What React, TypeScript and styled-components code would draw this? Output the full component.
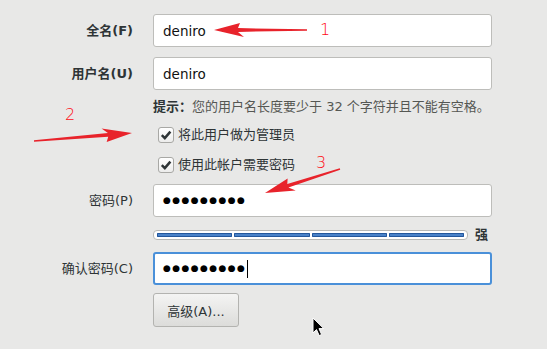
import React from "react";
import styled, { createGlobalStyle } from "styled-components";

const GlobalStyle = createGlobalStyle`
    html, body {
        margin: 0;
        padding: 0;
        background: #e8e8e7;
    }
    body {
        font-family: "DejaVu Sans", "Noto Sans CJK SC", sans-serif;
        font-size: 13px;
        color: #2e3436;
    }
`;

const Page = styled.div`
    position: relative;
    width: 547px;
    height: 349px;
    overflow: hidden;
    background: #e8e8e7;
`;

const Form = styled.div`
    display: flex;
    flex-direction: column;
`;

const Row = styled.div<{ $mt: number; $h?: number }>`
    display: grid;
    grid-template-columns: 133px 339px;
    column-gap: 20px;
    align-items: center;
    margin-top: ${(p) => p.$mt}px;
    height: ${(p) => (p.$h ? `${p.$h}px` : "auto")};
`;

const Label = styled.div<{ $bold?: boolean }>`
    grid-column: 1;
    text-align: right;
    font-weight: ${(p) => (p.$bold ? 700 : 400)};
    color: #2e3436;
    line-height: 16px;
`;

const Field = styled.div<{ $focused?: boolean }>`
    grid-column: 2;
    box-sizing: border-box;
    height: 33px;
    display: flex;
    align-items: center;
    padding-left: ${(p) => (p.$focused ? 8 : 9)}px;
    background: #ffffff;
    border: ${(p) => (p.$focused ? "2px solid #4a90d9" : "1px solid #bdbdba")};
    border-radius: 3px;
    color: #111;
    font-size: 13.5px;
`;

const Dots = styled.span`
    font-size: 9px;
    letter-spacing: 1.4px;
    color: #000;
    line-height: 1;
`;

const Caret = styled.span`
    display: inline-block;
    width: 1px;
    height: 18px;
    margin-left: 1px;
    background: #000;
`;

const Hint = styled.div`
    grid-column: 2;
    line-height: 16px;
    color: #555753;
    white-space: nowrap;
`;

const HintTitle = styled.span`
    font-weight: 700;
    color: #2e3436;
`;

const CheckRow = styled.label`
    grid-column: 2;
    display: flex;
    align-items: center;
    gap: 4px;
    padding-left: 5px;
    line-height: 16px;
    color: #2e3436;
`;

const CheckBox = styled.span`
    box-sizing: border-box;
    width: 16px;
    height: 16px;
    border: 1px solid #a8a8a5;
    border-radius: 3px;
    background: linear-gradient(#ffffff, #ececeb);
    display: flex;
    align-items: center;
    justify-content: center;
`;

const StrengthWrap = styled.div`
    grid-column: 2;
    display: flex;
    align-items: center;
    gap: 7px;
    height: 10px;
`;

const StrengthBar = styled.div`
    flex: 1;
    box-sizing: border-box;
    height: 10px;
    display: flex;
    gap: 2px;
    padding: 2px 3px;
    background: #ffffff;
    border: 1px solid #b8b8b5;
    border-radius: 4px;
`;

const Segment = styled.div`
    flex: 1;
    background: #4a82c8;
    box-shadow: inset 0 0 0 1px #23579c;
    border-radius: 1px;
`;

const StrengthText = styled.span`
    width: 17px;
    font-weight: 700;
    line-height: 10px;
    color: #2e3436;
`;

const Button = styled.button`
    grid-column: 2;
    box-sizing: border-box;
    width: 86px;
    height: 34px;
    padding: 0;
    font-family: inherit;
    font-size: 13px;
    color: #2e3436;
    background: linear-gradient(#f4f4f3, #dcdcda);
    border: 1px solid #b3b3b0;
    border-radius: 3px;
`;

const Overlay = styled.svg`
    position: absolute;
    left: 0;
    top: 0;
    pointer-events: none;
`;

const Number = styled.span<{ $x: number; $y: number }>`
    position: absolute;
    left: ${(p) => p.$x}px;
    top: ${(p) => p.$y}px;
    font-family: "DejaVu Sans", sans-serif;
    font-size: 16px;
    font-weight: 300;
    line-height: 16px;
    color: #ff0a14;
`;

const Pointer = styled.svg`
    position: absolute;
    left: 312px;
    top: 317px;
`;

type ArrowProps = { x1: number; y1: number; x2: number; y2: number };

// red annotation arrow, tail (x1,y1) -> tip (x2,y2)
const Arrow = ({ x1, y1, x2, y2 }: ArrowProps) => {
    const len = Math.hypot(x2 - x1, y2 - y1);
    const angle = (Math.atan2(y2 - y1, x2 - x1) * 180) / Math.PI;
    const H = 28;
    const W = 7;
    const pts = [
        [0, 0],
        [-H - 2, -W],
        [-H + 4, -1.9],
        [-len, -0.7],
        [-len, 0.7],
        [-H + 4, 1.9],
        [-H + 2, W],
    ]
        .map((p) => p.join(","))
        .join(" ");
    return (
        <g transform={`translate(${x2} ${y2}) rotate(${angle})`}>
            <polygon points={pts} fill="#e8232b" />
        </g>
    );
};

const Check = () => (
    <svg width="12" height="12" viewBox="0 0 12 12">
        <path d="M1.8 6.2 L4.8 9.1 L10.4 2.6" fill="none" stroke="#2e3436" strokeWidth="2.5" />
    </svg>
);

const App = () => {
    return (
        <Page>
            <GlobalStyle />
            <Form>
                <Row $mt={14}>
                    <Label $bold>全名(F)</Label>
                    <Field>deniro</Field>
                </Row>
                <Row $mt={10}>
                    <Label $bold>用户名(U)</Label>
                    <Field>deniro</Field>
                </Row>
                <Row $mt={9}>
                    <Hint>
                        <HintTitle>提示：</HintTitle>您的用户名长度要少于 32 个字符并且不能有空格。
                    </Hint>
                </Row>
                <Row $mt={12} $h={16}>
                    <CheckRow>
                        <CheckBox><Check /></CheckBox>
                        将此用户做为管理员
                    </CheckRow>
                </Row>
                <Row $mt={14} $h={16}>
                    <CheckRow>
                        <CheckBox><Check /></CheckBox>
                        使用此帐户需要密码
                    </CheckRow>
                </Row>
                <Row $mt={11}>
                    <Label>密码(P)</Label>
                    <Field><Dots>●●●●●●●●●</Dots></Field>
                </Row>
                <Row $mt={13} $h={10}>
                    <StrengthWrap>
                        <StrengthBar>
                            <Segment />
                            <Segment />
                            <Segment />
                            <Segment />
                        </StrengthBar>
                        <StrengthText>强</StrengthText>
                    </StrengthWrap>
                </Row>
                <Row $mt={12}>
                    <Label>确认密码(C)</Label>
                    <Field $focused><Dots>●●●●●●●●●</Dots><Caret /></Field>
                </Row>
                <Row $mt={8}>
                    <Button>高级(A)...</Button>
                </Row>
            </Form>

            <Overlay width="547" height="349">
                <Arrow x1={307} y1={30} x2={214} y2={30} />
                <Arrow x1={34} y1={141} x2={132} y2={133} />
                <Arrow x1={340} y1={169} x2={265} y2={193} />
            </Overlay>
            <Number $x={320} $y={22}>1</Number>
            <Number $x={65} $y={107}>2</Number>
            <Number $x={316} $y={155}>3</Number>

            <Pointer width="14" height="20" viewBox="0 0 14 20">
                <path d="M1 1 L1 16 L4.5 12.6 L7.2 18.6 L9.6 17.5 L7 11.6 L11.8 11.6 Z" fill="#000" stroke="#fff" strokeWidth="1" />
            </Pointer>
        </Page>
    );
};

export default App;
